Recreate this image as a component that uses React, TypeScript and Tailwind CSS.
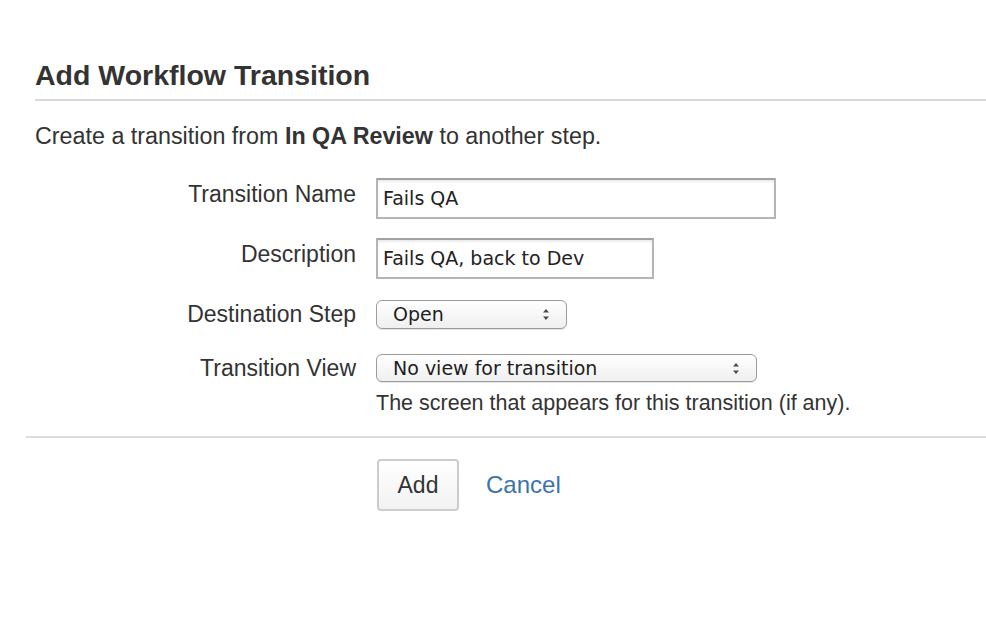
import React from "react";

const LABEL = "text-right text-[23px] leading-[28px] text-[#333333]";
const INPUT =
  "h-[41px] border-2 border-[#b5b5b5] border-t-[#a2a2a2] bg-white pl-[5px] flex items-center text-[19px] text-[#222222] shadow-[inset_0_2px_2px_#ececec] font-['DejaVu_Sans',sans-serif]";
const SELECT =
  "rounded-[6px] border-[1.5px] border-[#9c9c9c] bg-gradient-to-b from-white to-[#efefef] pl-[16px] pr-[16px] flex items-center justify-between text-[19px] text-[#1e1e1e] font-['DejaVu_Sans',sans-serif] shadow-[0_1px_0_#e4e4e4]";

function Arrows() {
  return (
    <svg width="8" height="13" viewBox="0 0 8 13" aria-hidden="true">
      <path d="M4 1 L7 4.5 L1 4.5 Z" fill="#4a4a4a" />
      <path d="M4 12 L7 8.5 L1 8.5 Z" fill="#4a4a4a" />
    </svg>
  );
}

export default function App() {
  return (
    <div className="w-[986px] h-[630px] bg-white font-['Liberation_Sans',Arial,sans-serif] text-[#333333] overflow-hidden">
      <div className="pt-[59px] ml-[35px]">
        <h2 className="text-[28.5px] leading-[32px] font-bold text-[#333333] pb-[8px] border-b-2 border-[#d9d9d9]">
          Add Workflow Transition
        </h2>
      </div>

      <p className="ml-[35px] mt-[21px] text-[23.3px] leading-[28px]">
        Create a transition from <span className="font-bold">In QA Review</span> to another step.
      </p>

      <div className="mt-[28px] grid grid-cols-[356px_1fr] gap-x-[20px]">
        <div className={LABEL + " mt-[2px]"}>Transition Name</div>
        <div className={INPUT + " w-[400px]"}>Fails QA</div>

        <div className={LABEL + " mt-[21px]"}>Description</div>
        <div className={INPUT + " w-[278px] mt-[19px]"}>Fails QA, back to Dev</div>

        <div className={LABEL + " mt-[21px]"}>Destination Step</div>
        <div className={SELECT + " w-[191px] h-[29px] mt-[21px]"}>
          <span>Open</span>
          <Arrows />
        </div>

        <div className={LABEL + " mt-[25px]"}>Transition View</div>
        <div className="mt-[25px]">
          <div className={SELECT + " w-[381px] h-[28px]"}>
            <span>No view for transition</span>
            <Arrows />
          </div>
          <div className="mt-[9px] text-[21.5px] leading-[24px] text-[#333333]">
            The screen that appears for this transition (if any).
          </div>
        </div>
      </div>

      <div className="ml-[26px] mt-[21px] border-t-2 border-[#dcdcdc]" />

      <div className="mt-[21px] ml-[377px] flex items-center gap-[27px]">
        <button className="w-[82px] h-[52px] rounded-[4px] border-2 border-[#cccccc] bg-gradient-to-b from-white to-[#f2f2f2] text-[23px] text-[#333333]">
          Add
        </button>
        <a className="text-[24px] text-[#3b73af]">Cancel</a>
      </div>
    </div>
  );
}
